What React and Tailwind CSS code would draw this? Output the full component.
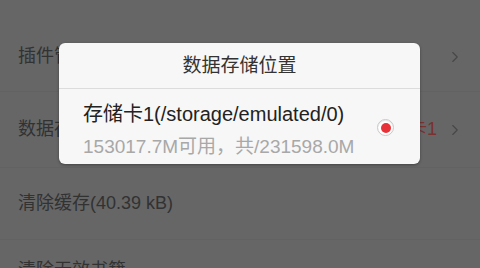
import { ChevronRight } from 'lucide-react';

const font = { fontFamily: '"Liberation Sans", "Noto Sans CJK SC", sans-serif' };

function Row({ label, value, chevron, className }) {
  return (
    <div className={`flex items-center pl-[18px] pr-[16px] border-b border-[#626262] ${className}`}>
      <span className="text-[18px] text-[#323232]">{label}</span>
      <div className="ml-auto flex items-center gap-[9px]">
        {value && <span className="text-[18px] text-[#7a3131]">{value}</span>}
        {chevron && <ChevronRight size={18} strokeWidth={1.5} className="text-[#474747]" />}
      </div>
    </div>
  );
}

export default function App() {
  return (
    <div className="relative w-[480px] h-[268px] overflow-hidden bg-[#666666]" style={font}>
      <div className="pt-[22px]">
        <Row label="插件管理" chevron className="h-[70px]" />
        <Row label="数据存储位置" value="存储卡1" chevron className="h-[76px]" />
        <Row label="清除缓存(40.39 kB)" className="h-[72px]" />
        <Row label="清除无效书籍" className="h-[60px] border-b-0" />
      </div>

      <div className="absolute left-[59px] top-[43px] w-[361px] rounded-[6px] bg-[#f7f7f7] shadow-[0_1px_3px_rgba(0,0,0,0.35)]">
        <div className="h-[46px] flex items-center justify-center border-b border-[#dcdcdc]">
          <span className="text-[19px] text-[#333] pt-[2px]">数据存储位置</span>
        </div>
        <div className="flex items-start pl-[24px] pr-[26px] pt-[14px] h-[75px]">
          <div className="flex flex-col gap-[9px]">
            <span className="text-[20px] leading-[23px] text-[#222] whitespace-nowrap">存储卡1(/storage/emulated/0)</span>
            <span className="text-[19px] leading-[23px] text-[#a8a8a8] whitespace-nowrap">153017.7M可用，共/231598.0M</span>
          </div>
          <div className="ml-auto mt-[16px] w-[17px] h-[17px] shrink-0 rounded-full border border-[#c8c8c8] bg-white flex items-center justify-center shadow-[inset_0_1px_1px_rgba(0,0,0,0.1)]">
            <div className="w-[10px] h-[10px] rounded-full bg-[#e8323a]" />
          </div>
        </div>
      </div>
    </div>
  );
}
